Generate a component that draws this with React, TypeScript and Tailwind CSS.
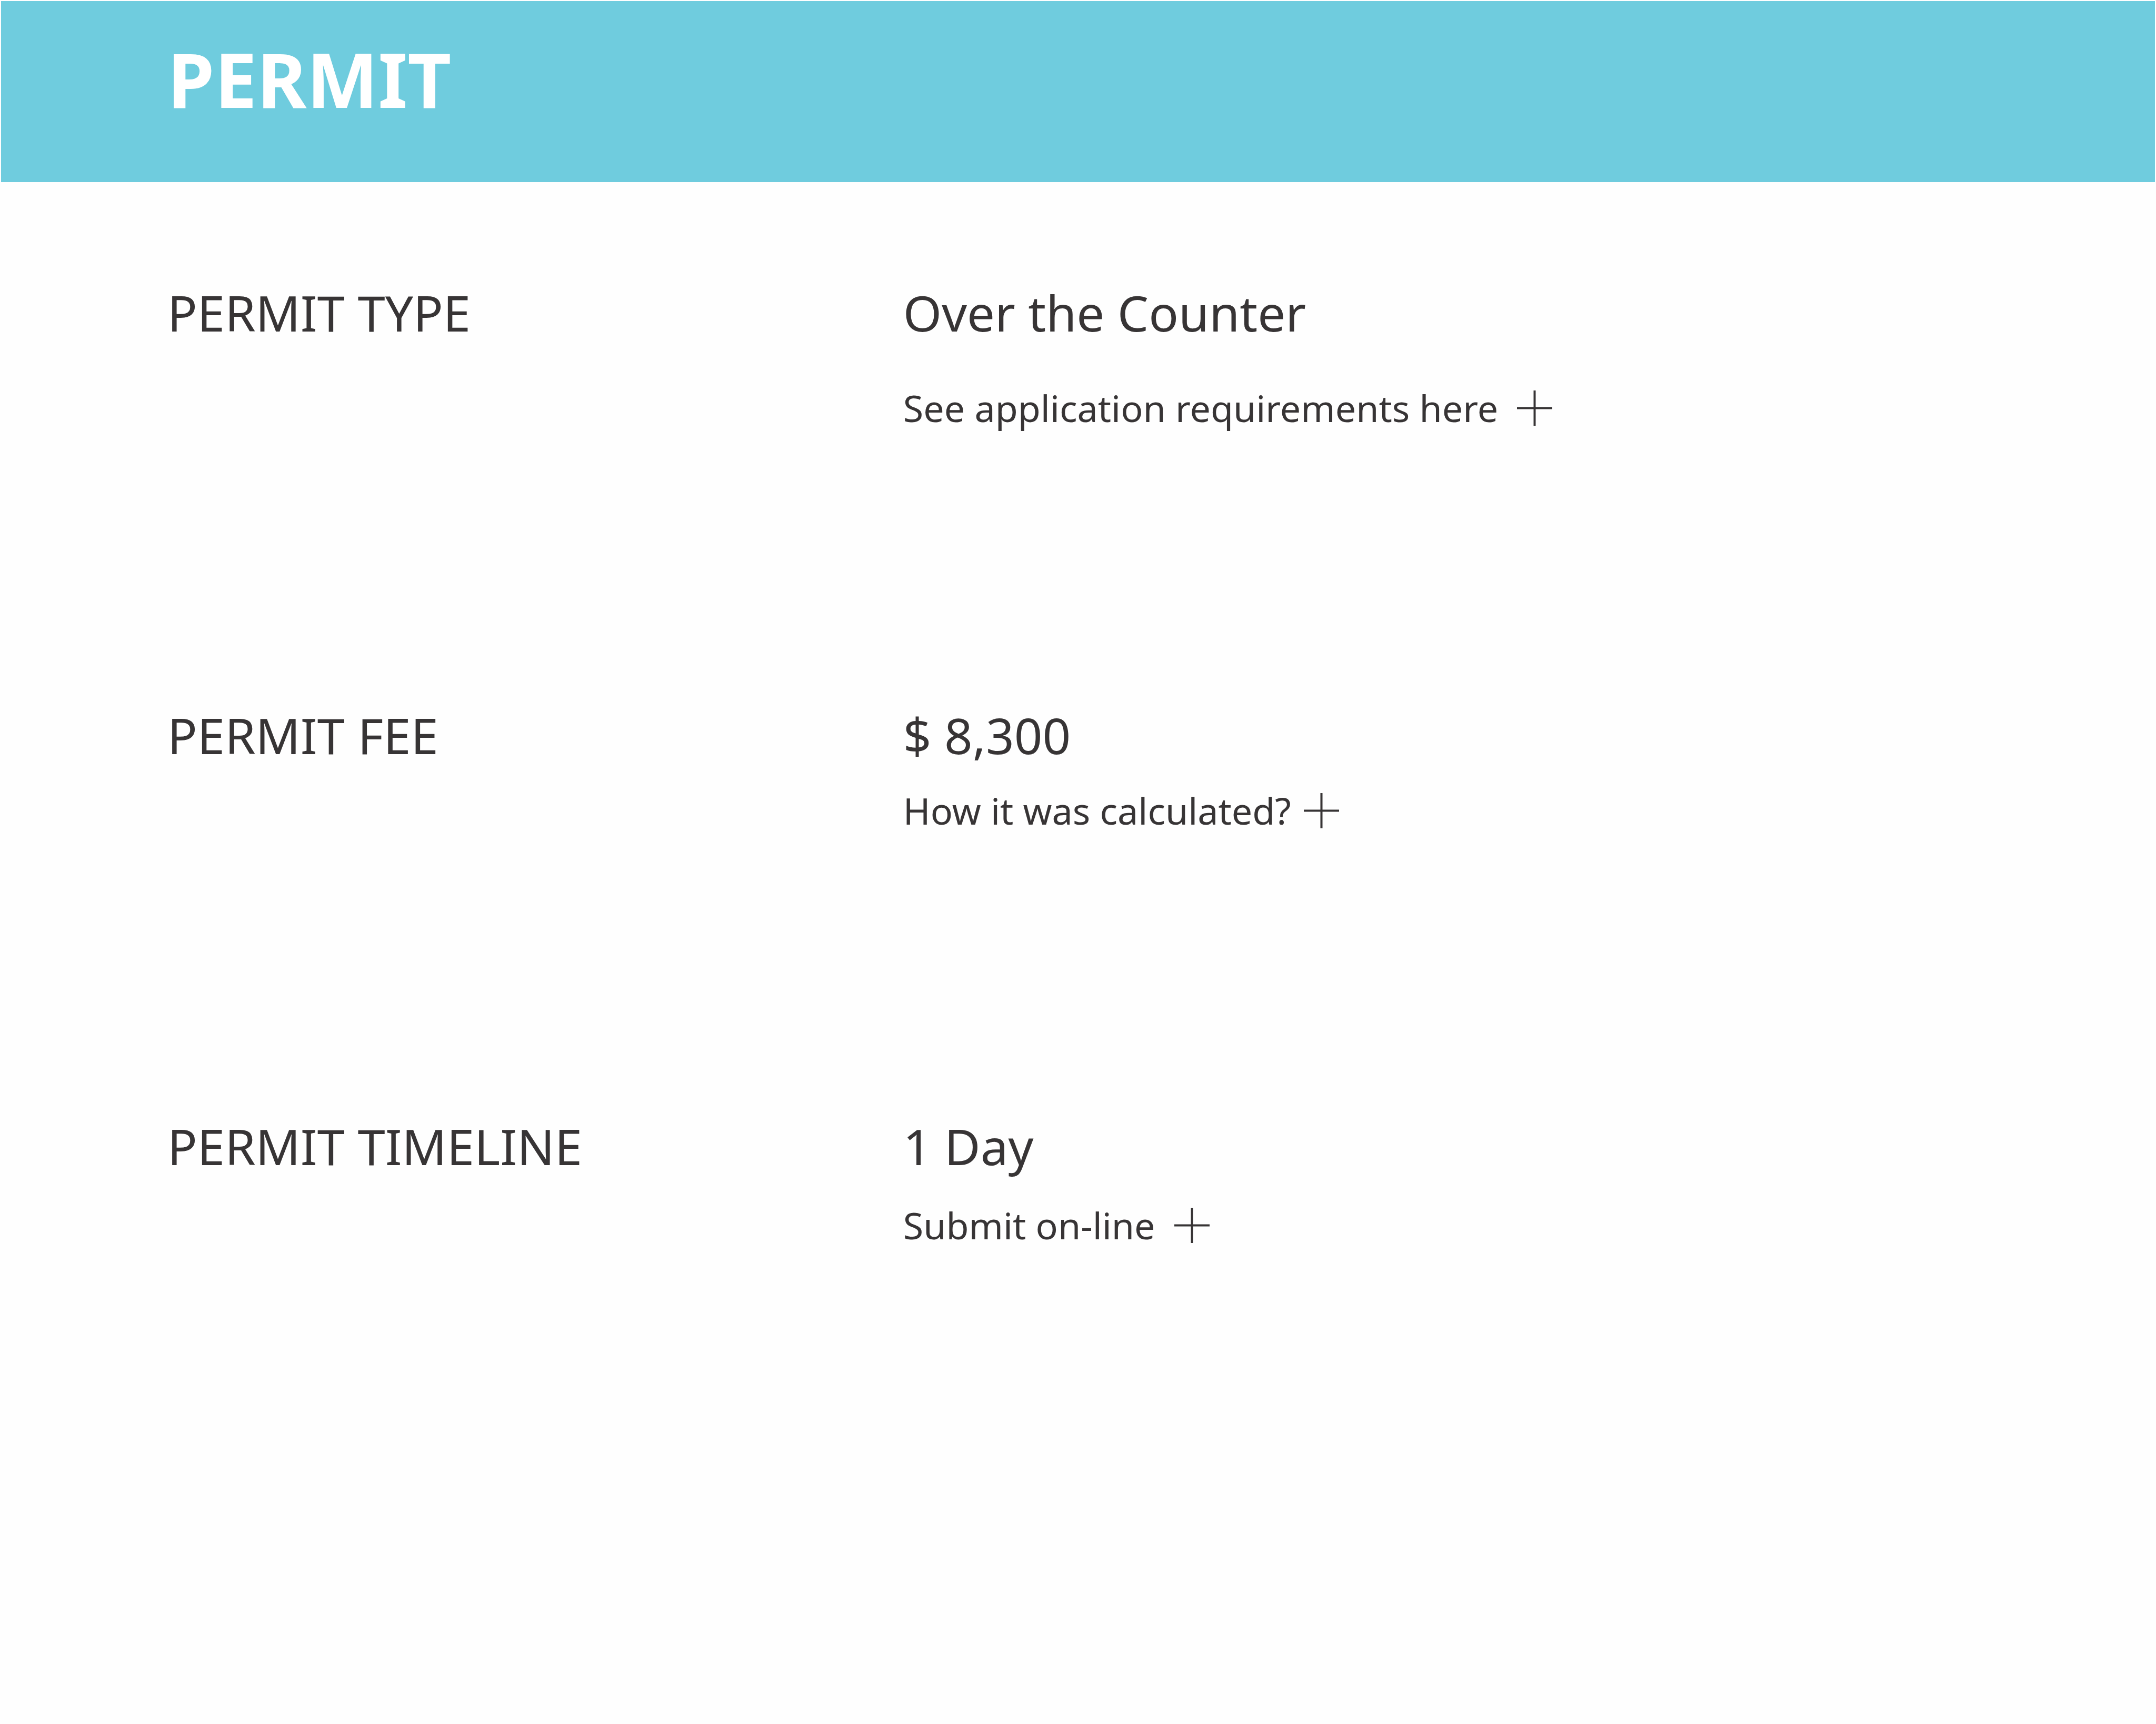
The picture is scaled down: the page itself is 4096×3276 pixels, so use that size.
import { ReactNode } from "react";

function PlusIcon() {
  return (
    <svg viewBox="0 0 67 67" className="size-[67px] shrink-0" aria-hidden="true">
      <path d="M33.5 0V67M0 33.5H67" fill="none" stroke="currentColor" strokeWidth="4" />
    </svg>
  );
}

type RowProps = {
  label: string;
  value: string;
  action: string;
  className: string;
  actionClassName: string;
};

function PermitRow({ label, value, action, className, actionClassName }: RowProps): ReactNode {
  return (
    <section className={`grid grid-cols-[37fr_63fr] items-start ${className}`}>
      <h2 className="text-[94px] leading-[100px]">{label}</h2>
      <div className="flex flex-col items-start">
        <p className="text-[94px] leading-[100px]">{value}</p>
        <button
          type="button"
          className={`flex cursor-pointer items-center text-[70px] leading-[80px] ${actionClassName}`}
        >
          <span className="whitespace-nowrap">{action}</span>
          <PlusIcon />
        </button>
      </div>
    </section>
  );
}

export default function App() {
  return (
    <div className="min-h-screen bg-[#fefefe] font-['Noto_Sans',sans-serif] text-[#373435]">
      <header className="border-x-2 border-t-2 border-[#fefefe] bg-[#6fccde] pt-[67px] pb-[117px] pl-[316px]">
        <h1 className="text-[144px] leading-[160px] font-bold text-white">PERMIT</h1>
      </header>
      <main className="pt-[198px] pl-[318px]">
        <PermitRow
          label="PERMIT TYPE"
          value="Over the Counter"
          action="See application requirements here"
          className="mb-[532px]"
          actionClassName="mt-[91px] gap-9"
        />
        <PermitRow
          label="PERMIT FEE"
          value="$ 8,300"
          action="How it was calculated?"
          className="mb-[548px]"
          actionClassName="mt-[53px] gap-6"
        />
        <PermitRow
          label="PERMIT TIMELINE"
          value="1 Day"
          action="Submit on-line"
          className=""
          actionClassName="mt-[60px] gap-9"
        />
      </main>
    </div>
  );
}
